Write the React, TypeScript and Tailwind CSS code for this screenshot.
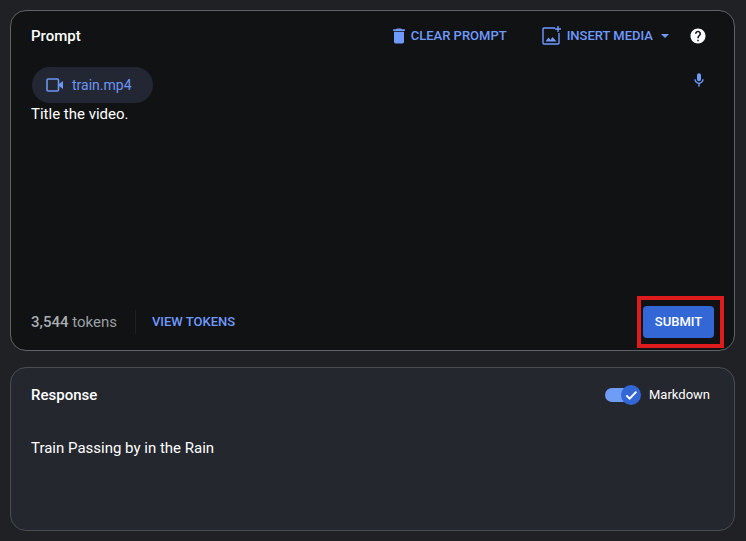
import React from 'react';

const BLUE = 'text-[#6f9aff]';

const TrashIcon = () => (
  <svg width="20" height="20" viewBox="0 0 24 24" fill="currentColor">
    <path d="M6 19c0 1.1.9 2 2 2h8c1.1 0 2-.9 2-2V7H6v12zM19 4h-3.5l-1-1h-5l-1 1H5v2h14V4z" />
  </svg>
);

const AddPhotoIcon = () => (
  <svg width="20" height="20" viewBox="0 0 20 20" fill="none" stroke="currentColor" strokeWidth="1.4">
    <path d="M13 2H2a1 1 0 0 0-1 1v14a1 1 0 0 0 1 1h14a1 1 0 0 0 1-1V7" />
    <path d="M16 0v6M13 3h6" />
    <path d="M3.5 15.5l3-4 2 2.4 2-3 4 4.6z" fill="currentColor" stroke="none" />
  </svg>
);

const VideoIcon = () => (
  <svg width="18" height="16" viewBox="0 0 18 16" fill="none" stroke="currentColor" strokeWidth="1.6">
    <rect x="1" y="2" width="11.5" height="12" rx="1.2" />
    <path d="M13 7l4-3v8l-4-3z" fill="currentColor" stroke="none" />
  </svg>
);

const MicIcon = () => (
  <svg width="16" height="16" viewBox="0 0 24 24" fill="currentColor">
    <path d="M12 14c1.66 0 3-1.34 3-3V5c0-1.66-1.34-3-3-3S9 3.34 9 5v6c0 1.66 1.34 3 3 3z" />
    <path d="M17 11c0 2.76-2.24 5-5 5s-5-2.24-5-5H5c0 3.53 2.61 6.43 6 6.92V22h2v-4.08c3.39-.49 6-3.39 6-6.92h-2z" />
  </svg>
);

const HelpIcon = () => (
  <svg width="18" height="18" viewBox="0 0 24 24" fill="currentColor">
    <path d="M12 2C6.48 2 2 6.48 2 12s4.48 10 10 10 10-4.48 10-10S17.52 2 12 2zm1 17h-2v-2h2v2zm2.07-7.75l-.9.92C13.45 12.9 13 13.5 13 15h-2v-.5c0-1.1.45-2.1 1.17-2.83l1.24-1.26c.37-.36.59-.86.59-1.41 0-1.1-.9-2-2-2s-2 .9-2 2H8c0-2.21 1.79-4 4-4s4 1.79 4 4c0 .88-.36 1.68-.93 2.25z" />
  </svg>
);

const CheckIcon = () => (
  <svg width="16" height="16" viewBox="0 0 24 24" fill="none" stroke="currentColor" strokeWidth="3">
    <path d="M5 12.5l5 5L20 7" />
  </svg>
);

export default function App() {
  return (
    <div className="w-[746px] h-[541px] bg-[#202124] pl-[10px] pr-[11px] pt-[10px] flex flex-col gap-4 overflow-hidden font-['Roboto',sans-serif]">
      {/* Prompt */}
      <div className="h-[341px] rounded-2xl border border-[#5f6368] bg-[#111213] flex flex-col pl-5 pr-[20px]">
        <div className="flex items-center h-[49px] shrink-0">
          <span className="text-[15px] font-medium text-white mt-px">Prompt</span>
          <div className={`ml-auto flex items-center ${BLUE} text-[13px] font-medium pr-[7px]`}>
            <TrashIcon />
            <span className="ml-[2px]">CLEAR PROMPT</span>
            <span className="ml-[35px]"><AddPhotoIcon /></span>
            <span className="ml-[5px]">INSERT MEDIA</span>
            <span className="ml-[8px] w-0 h-0 border-x-[4px] border-x-transparent border-t-[4px] border-t-[#6f9aff]" />
            <span className="ml-[20px] text-white"><HelpIcon /></span>
          </div>
        </div>

        <div className="flex items-start justify-between mt-[7px]">
          <div className="flex items-center h-9 w-[121px] ml-px pl-[14px] rounded-[18px] bg-[#222733] text-[#6d95f5] text-sm gap-[8px]">
            <span className="mb-px"><VideoIcon /></span>
            <span className="mb-px">train.mp4</span>
          </div>
          <span className={`${BLUE} mt-[5px] mr-[7px]`}><MicIcon /></span>
        </div>
        <p className="text-[15px] leading-5 text-white mt-px">Title the video.</p>

        <div className="mt-auto flex items-center h-[32px] mb-[12px]">
          <span className="text-[15px] text-[#9aa0a6]"><span className="font-medium text-[#a8adb2]">3,544</span> tokens</span>
          <span className="ml-[18px] h-6 w-px bg-[#202124]" />
          <span className={`ml-4 text-[13px] font-medium ${BLUE}`}>VIEW TOKENS</span>
          <div className="relative ml-auto">
            <button className="w-[71px] h-8 rounded bg-[#3367d6] text-white text-[13px] font-medium">SUBMIT</button>
            <div className="absolute left-[-6px] top-[-10px] w-[87px] h-[52px] border-4 border-[#e01b1b]" />
          </div>
        </div>
      </div>

      {/* Response */}
      <div className="h-[164px] shrink-0 rounded-2xl border border-[#494c50] bg-[#24272e] pl-5 pr-[24px]">
        <div className="flex items-center h-[54px]">
          <span className="text-[15px] font-medium text-white">Response</span>
          <div className="ml-auto flex items-center">
            <div className="relative w-[36px] h-[20px] flex items-center">
              <div className="w-[30px] h-[14px] rounded-full bg-[#6f9df5]" />
              <div className="absolute right-0 top-0 w-5 h-5 rounded-full bg-[#3367d6] flex items-center justify-center text-white">
                <CheckIcon />
              </div>
            </div>
            <span className="ml-2 text-[13px] text-white">Markdown</span>
          </div>
        </div>
        <p className="mt-[16px] text-[15px] leading-5 text-white">Train Passing by in the Rain</p>
      </div>
    </div>
  );
}
